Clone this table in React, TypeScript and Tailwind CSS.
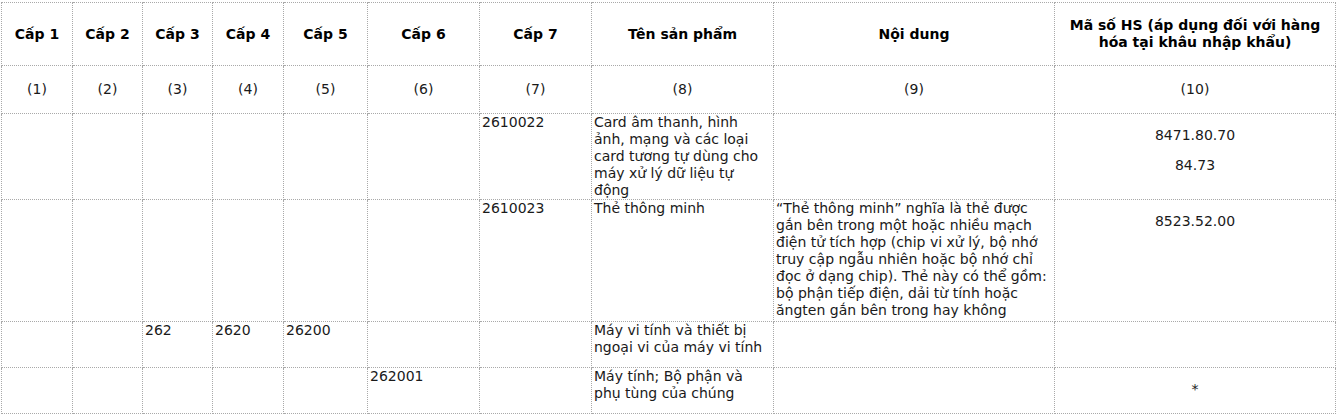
import React from "react";

const widths = [71, 70, 70, 71, 84, 112, 112, 182, 281, 281];
const headers = ["Cấp 1", "Cấp 2", "Cấp 3", "Cấp 4", "Cấp 5", "Cấp 6", "Cấp 7", "Tên sản phẩm", "Nội dung"];

const td = "border border-dotted border-[#a9a9a9] align-top px-[2px] py-0 text-left";
const hs = "border border-dotted border-[#a9a9a9] align-top px-[2px] py-0 text-center";

export default function App() {
  return (
    <div className="w-[1337px] h-[416px] bg-white pt-[2px] pl-[1px] overflow-hidden" style={{ fontFamily: '"DejaVu Sans", Verdana, sans-serif' }}>
      <table className="table-fixed border-collapse w-[1334px] text-[14px] leading-[17px] text-[#1a1a1a]">
        <colgroup>
          {widths.map((w, i) => (
            <col key={i} style={{ width: w }} />
          ))}
        </colgroup>
        <tbody>
          <tr className="h-[63px]">
            {headers.map((h, i) => (
              <td key={i} className="border border-dotted border-[#a9a9a9] text-center align-middle font-bold text-black px-[4px]">
                {h}
              </td>
            ))}
            <td className="border border-dotted border-[#a9a9a9] text-center align-middle font-bold text-black px-[4px]">
              Mã số HS (áp dụng đối với hàng
              <br />
              hóa tại khâu nhập khẩu)
            </td>
          </tr>
          <tr className="h-[48px]">
            {widths.map((_, i) => (
              <td key={i} className="border border-dotted border-[#a9a9a9] text-center align-middle">
                ({i + 1})
              </td>
            ))}
          </tr>
          <tr className="h-[86px]">
            <td className={td}></td>
            <td className={td}></td>
            <td className={td}></td>
            <td className={td}></td>
            <td className={td}></td>
            <td className={td}></td>
            <td className={td}>2610022</td>
            <td className={td}>Card âm thanh, hình ảnh, mạng và các loại card tương tự dùng cho máy xử lý dữ liệu tự động</td>
            <td className={td}></td>
            <td className={hs}>
              <p className="my-[13px]">8471.80.70</p>
              <p className="my-[13px]">84.73</p>
            </td>
          </tr>
          <tr className="h-[122px]">
            <td className={td}></td>
            <td className={td}></td>
            <td className={td}></td>
            <td className={td}></td>
            <td className={td}></td>
            <td className={td}></td>
            <td className={td}>2610023</td>
            <td className={td}>Thẻ thông minh</td>
            <td className={td}>“Thẻ thông minh” nghĩa là thẻ được gắn bên trong một hoặc nhiều mạch điện tử tích hợp (chip vi xử lý, bộ nhớ truy cập ngẫu nhiên hoặc bộ nhớ chỉ đọc ở dạng chip). Thẻ này có thể gồm: bộ phận tiếp điện, dải từ tính hoặc ăngten gắn bên trong hay không</td>
            <td className={hs}>
              <p className="my-[13px]">8523.52.00</p>
            </td>
          </tr>
          <tr className="h-[46px]">
            <td className={td}></td>
            <td className={td}></td>
            <td className={td}>262</td>
            <td className={td}>2620</td>
            <td className={td}>26200</td>
            <td className={td}></td>
            <td className={td}></td>
            <td className={td}>Máy vi tính và thiết bị ngoại vi của máy vi tính</td>
            <td className={td}></td>
            <td className={hs}></td>
          </tr>
          <tr className="h-[46px]">
            <td className={td}></td>
            <td className={td}></td>
            <td className={td}></td>
            <td className={td}></td>
            <td className={td}></td>
            <td className={td}>262001</td>
            <td className={td}></td>
            <td className={td}>Máy tính; Bộ phận và phụ tùng của chúng</td>
            <td className={td}></td>
            <td className={hs}>
              <p className="my-[13px]">*</p>
            </td>
          </tr>
        </tbody>
      </table>
    </div>
  );
}
